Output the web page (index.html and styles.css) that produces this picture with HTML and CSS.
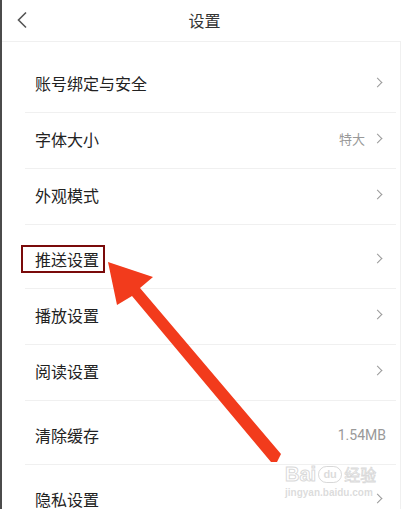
FILE: index.html
```html
<!DOCTYPE html>
<html lang="zh-CN">

<head>
    <meta charset="UTF-8">
    <meta name="viewport" content="width=device-width, initial-scale=1.0">
    <title>设置</title>
    <link rel="stylesheet" href="styles.css">
</head>

<body>
    <div class="screen">
        <div class="page">
            <header class="top-bar">
                <svg class="back-icon" width="12" height="18" viewBox="0 0 12 18">
                    <path d="M10 1.5 L2.5 9 L10 16.5" fill="none" stroke="#555" stroke-width="1.6" />
                </svg>
                <h1 class="title">设置</h1>
            </header>

            <ul class="settings-list">
                <li class="row">
                    <span class="label">账号绑定与安全</span>
                    <span class="chevron"></span>
                </li>
                <li class="row">
                    <span class="label">字体大小</span>
                    <span class="value">特大</span>
                    <span class="chevron"></span>
                </li>
                <li class="row">
                    <span class="label">外观模式</span>
                    <span class="chevron"></span>
                </li>
                <li class="row row-tall">
                    <span class="label">推送设置</span>
                    <span class="chevron"></span>
                </li>
                <li class="row">
                    <span class="label">播放设置</span>
                    <span class="chevron"></span>
                </li>
                <li class="row">
                    <span class="label">阅读设置</span>
                    <span class="chevron"></span>
                </li>
                <li class="row row-tall">
                    <span class="label">清除缓存</span>
                    <span class="value value-last">1.54MB</span>
                </li>
                <li class="row row-tall">
                    <span class="label">隐私设置</span>
                    <span class="chevron"></span>
                </li>
            </ul>
        </div>

        <!-- annotation drawn over the screenshot -->
        <div class="highlight-box"></div>
        <svg class="arrow" width="403" height="509" viewBox="0 0 403 509">
            <polygon fill="#f23b1c"
                points="108,262 153,277 140,288 281,454 277,462 271,462 132,296 117,305" />
        </svg>

        <div class="watermark">
            <div class="wm-top">
                <span class="wm-bai">Bai</span>
                <span class="wm-paw">du</span>
                <span class="wm-jy">经验</span>
            </div>
            <div class="wm-url">jingyan.baidu.com</div>
        </div>
    </div>
</body>

</html>
```

FILE: styles.css
```css
* {
    box-sizing: border-box;
}

body {
    margin: 0;
    padding: 0;
    background: #ffffff;
    font-family: "Noto Sans CJK SC", "Noto Sans", sans-serif;
}

.screen {
    position: relative;
    width: 403px;
    height: 509px;
    overflow: hidden;
    border-left: 2px solid #4b4b4b;
}

.page {
    width: 399px;
}

/* Top bar */
.top-bar {
    height: 42px;
    display: flex;
    align-items: center;
    justify-content: center;
    position: relative;
    border-bottom: 1px solid #f0f0f0;
}

.back-icon {
    position: absolute;
    left: 14px;
    top: 11px;
}

.title {
    margin: 0 0 2px 6px;
    font-size: 16px;
    font-weight: 400;
    color: #333;
}

/* List */
.settings-list {
    list-style: none;
    margin: 0;
    padding: 15px 0 0 0;
    height: 467px;
    border-right: 1px solid #f0f0f0;
}

.row {
    height: 56px;
    margin: 0 4px 0 23px;
    padding: 0 12px 4px 10px;
    display: flex;
    align-items: center;
    border-bottom: 1px solid #f0f0f0;
}

.row-tall {
    height: 64px;
    padding-top: 4px;
    padding-bottom: 0;
}

.label {
    flex: 1;
    font-size: 16px;
    color: #222;
}

.value {
    font-size: 13px;
    color: #999;
    margin-right: 9px;
}

.value-last {
    margin-right: -2px;
    font-family: "Roboto", sans-serif;
    font-size: 14px;
}

.chevron {
    width: 7px;
    height: 7px;
    border-top: 1.5px solid #9a9a9a;
    border-right: 1.5px solid #9a9a9a;
    transform: rotate(45deg);
    margin-right: 3px;
}

/* Annotation */
.highlight-box {
    position: absolute;
    left: 19px;
    top: 245px;
    width: 84px;
    height: 28px;
    border: 2.5px solid #7a0a0a;
}

.arrow {
    position: absolute;
    left: -2px;
    top: 0;
}

/* Watermark */
.watermark {
    position: absolute;
    left: 283px;
    top: 462px;
    color: rgba(190, 190, 190, 0.55);
    font-family: "Liberation Sans", sans-serif;
}

.wm-top {
    display: flex;
    align-items: center;
    gap: 2px;
}

.wm-bai {
    font-size: 20px;
    font-weight: 700;
    color: transparent;
    -webkit-text-stroke: 1px rgba(190, 190, 190, 0.6);
}

.wm-paw {
    width: 24px;
    height: 17px;
    border: 1px solid rgba(190, 190, 190, 0.6);
    border-radius: 9px;
    font-size: 11px;
    font-weight: 700;
    text-align: center;
    line-height: 15px;
}

.wm-jy {
    font-family: "Noto Sans CJK SC", sans-serif;
    font-size: 16px;
    color: transparent;
    -webkit-text-stroke: 0.8px rgba(190, 190, 190, 0.6);
}

.wm-url {
    font-size: 10px;
    font-weight: 700;
    margin-top: 1px;
}
```
